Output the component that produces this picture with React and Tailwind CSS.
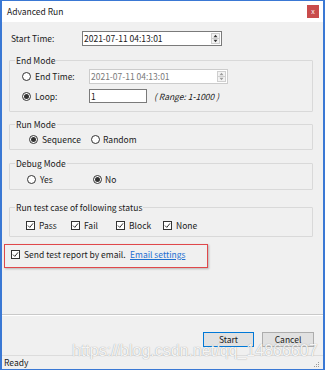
import React from 'react';

const font = "font-['Noto_Sans_CJK_SC','Noto_Sans',sans-serif]";

function Radio({ checked }) {
    return (
        <span className="w-[9px] h-[9px] rounded-full border border-[#333] bg-white flex items-center justify-center shrink-0">
            {checked && <span className="w-[5px] h-[5px] rounded-full bg-[#333]" />}
        </span>
    );
}

function Check() {
    return (
        <span className="w-[9px] h-[9px] border border-[#333] bg-white flex items-center justify-center shrink-0">
            <svg width="7" height="7" viewBox="0 0 7 7">
                <path d="M1 3.6 L2.8 5.4 L6 1.4" fill="none" stroke="#333" strokeWidth="1" />
            </svg>
        </span>
    );
}

function Spinner({ disabled }) {
    const c = disabled ? '#9a9a9a' : '#333';
    return (
        <span className="flex flex-col w-[9px] h-[11px] mr-[1px] border border-[#cfcfcf] bg-[#f3f3f3]">
            <svg width="7" height="4" viewBox="0 0 7 4"><path d="M3.5 0.8 L5.5 3.2 L1.5 3.2 Z" fill={c} /></svg>
            <span className="h-px bg-[#cfcfcf]" />
            <svg width="7" height="4" viewBox="0 0 7 4"><path d="M1.5 0.8 L5.5 0.8 L3.5 3.2 Z" fill={c} /></svg>
        </span>
    );
}

function Group({ title, className, children }) {
    return (
        <fieldset className={`border border-[#d9d9d9] rounded-[1px] ${className}`}>
            <legend className="ml-[5px] px-[1px] leading-[12px]">{title}</legend>
            {children}
        </fieldset>
    );
}

export default function App() {
    return (
        <div className={`${font} relative w-[325px] h-[370px] bg-[#f0f0f0] text-[8.5px] text-[#1a1a1a] border-x-2 border-t border-b border-[#3a78d4] flex flex-col overflow-hidden`}>
            {/* title bar */}
            <div className="h-[21px] bg-white flex items-center justify-between pl-[5px] pr-[4px] shrink-0">
                <span className="text-[8.5px]">Advanced Run</span>
                <span className="w-[12px] h-[13px] bg-[#c94c4c] text-white text-[7px] leading-none flex items-center justify-center">x</span>
            </div>

            <div className="flex flex-col pl-[7px] pr-[10px]">
                {/* start time */}
                <div className="mt-[9px] h-[15px] flex items-center pl-[2px]">
                    <span className="w-[71px]">Start Time:</span>
                    <div className="w-[140px] h-[15px] bg-white border border-[#7a7a7a] flex items-center justify-between pl-[1px]">
                        <span>2021-07-11 04:13:01</span>
                        <Spinner />
                    </div>
                </div>

                <Group title="End Mode" className="mt-[8px] h-[58px]">
                    <div className="flex flex-col gap-[4px] pt-[2px] pl-[12px]">
                        <div className="h-[16px] flex items-center">
                            <Radio />
                            <span className="ml-[4px] w-[54px]">End Time:</span>
                            <div className="w-[139px] h-[15px] bg-white border border-[#cccccc] text-[#7a7a7a] flex items-center justify-between pl-[1px]">
                                <span>2021-07-11 04:13:01</span>
                                <Spinner disabled />
                            </div>
                        </div>
                        <div className="h-[16px] flex items-center">
                            <Radio checked />
                            <span className="ml-[4px] w-[54px]">Loop:</span>
                            <div className="w-[58px] h-[14px] bg-white border border-[#7a7a7a] flex items-center pl-[1px]">1</div>
                            <span className="ml-[7px] italic">( Range: 1-1000 )</span>
                        </div>
                    </div>
                </Group>

                <Group title="Run Mode" className="mt-[6px] h-[32px]">
                    <div className="h-[16px] mt-[1px] flex items-center pl-[19px]">
                        <span className="w-[62px] flex items-center gap-[4px]"><Radio checked />Sequence</span>
                        <span className="flex items-center gap-[3px]"><Radio />Random</span>
                    </div>
                </Group>

                <Group title="Debug Mode" className="mt-[7px] h-[33px]">
                    <div className="h-[16px] mt-[2px] flex items-center pl-[17px]">
                        <span className="w-[66px] flex items-center gap-[4px]"><Radio />Yes</span>
                        <span className="flex items-center gap-[3px]"><Radio checked />No</span>
                    </div>
                </Group>

                <Group title="Run test case of following status" className="mt-[11px] h-[36px]">
                    <div className="h-[16px] mt-[4px] flex items-center pl-[16px]">
                        <span className="w-[45px] flex items-center gap-[4px]"><Check />Pass</span>
                        <span className="w-[45px] flex items-center gap-[4px]"><Check />Fail</span>
                        <span className="w-[47px] flex items-center gap-[4px]"><Check />Block</span>
                        <span className="flex items-center gap-[4px]"><Check />None</span>
                    </div>
                </Group>

                <div className="mt-[7px] ml-[-5px] w-[204px] h-[24px] border border-[#e0484b] shadow-[1px_1px_2px_rgba(0,0,0,0.25)] flex items-center pl-[6px] pb-[3px] whitespace-nowrap">
                    <Check />
                    <span className="ml-[4px] w-[106px] shrink-0">Send test report by email.</span>
                    <span className="text-[#1e6fd0] underline">Email settings</span>
                </div>
            </div>

            <div className="flex-1" />
            <div className="h-px bg-[#c9c9c9]" />
            <div className="h-px bg-white" />

            <div className="h-[39px] flex justify-end items-start pt-[16px] pr-[9px] gap-[8px] shrink-0">
                <button className="w-[51px] h-[15px] bg-[#e1e1e1] border border-[#0078d7] leading-none">Start</button>
                <button className="w-[52px] h-[15px] bg-[#e1e1e1] border border-[#adadad] leading-none">Cancel</button>
            </div>

            <div className="h-px bg-[#dcdcdc]" />
            <div className="h-[13px] flex items-center justify-between pl-[2px] pr-[3px] shrink-0">
                <span>Ready</span>
                <svg width="7" height="7" viewBox="0 0 7 7" className="self-end mb-[1px]">
                    <rect x="5" y="1" width="1" height="1" fill="#9a9a9a" />
                    <rect x="3" y="3" width="1" height="1" fill="#9a9a9a" />
                    <rect x="5" y="3" width="1" height="1" fill="#9a9a9a" />
                    <rect x="1" y="5" width="1" height="1" fill="#9a9a9a" />
                    <rect x="3" y="5" width="1" height="1" fill="#9a9a9a" />
                    <rect x="5" y="5" width="1" height="1" fill="#9a9a9a" />
                </svg>
            </div>

            {/* watermark */}
            <span className="absolute left-[70px] top-[342px] font-['Liberation_Sans',sans-serif] text-[16px] leading-[16px] text-white/90 [text-shadow:0_0_1px_#8a8a8a] pointer-events-none whitespace-nowrap">
                https://blog.csdn.net/qq_14866607
            </span>
        </div>
    );
}
